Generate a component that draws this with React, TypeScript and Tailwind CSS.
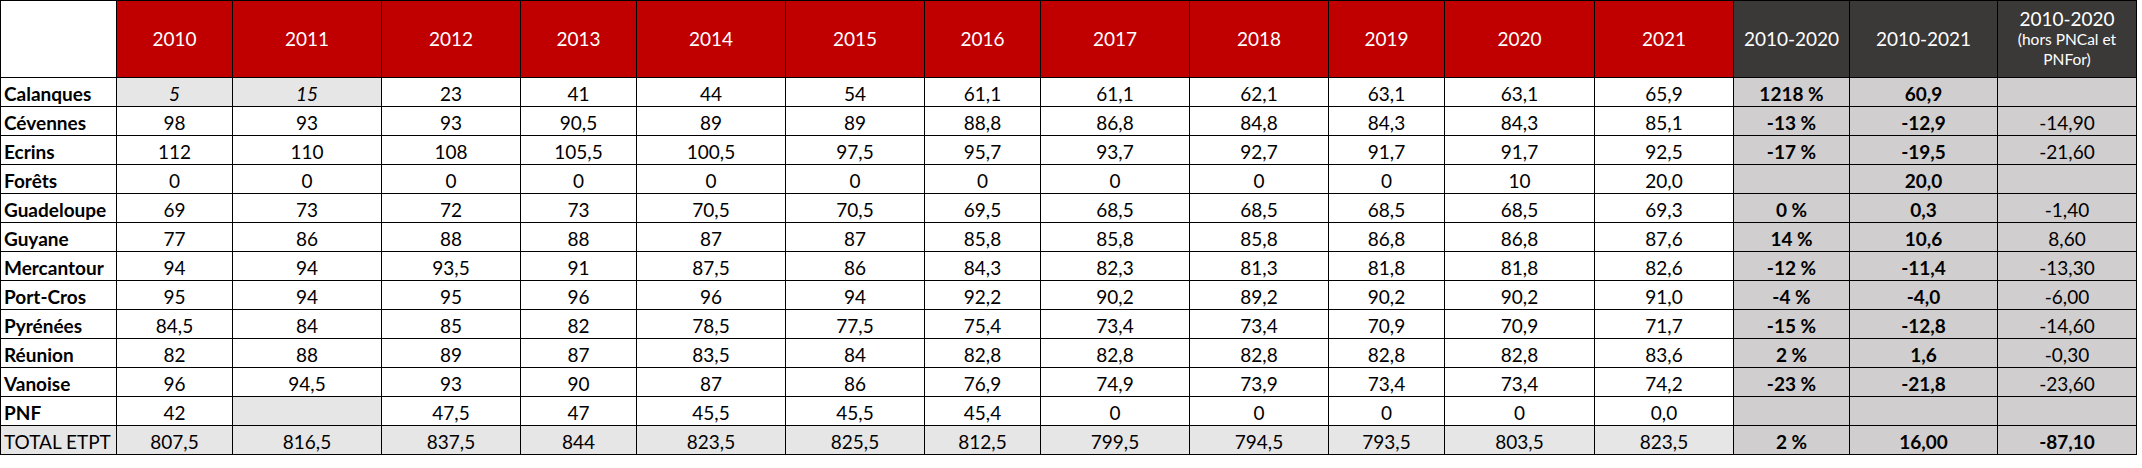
import React from "react";

type Row = {
  label: string;
  labelBold: boolean;
  years: string[];
  pct: string;
  diff: string;
  hors: string;
  total?: boolean;
};

const years = ["2010","2011","2012","2013","2014","2015","2016","2017","2018","2019","2020","2021"];

const rows: Row[] = [
  { label: "Calanques", labelBold: true, years: ["5","15","23","41","44","54","61,1","61,1","62,1","63,1","63,1","65,9"], pct: "1218 %", diff: "60,9", hors: "" },
  { label: "Cévennes", labelBold: true, years: ["98","93","93","90,5","89","89","88,8","86,8","84,8","84,3","84,3","85,1"], pct: "-13 %", diff: "-12,9", hors: "-14,90" },
  { label: "Ecrins", labelBold: true, years: ["112","110","108","105,5","100,5","97,5","95,7","93,7","92,7","91,7","91,7","92,5"], pct: "-17 %", diff: "-19,5", hors: "-21,60" },
  { label: "Forêts", labelBold: true, years: ["0","0","0","0","0","0","0","0","0","0","10","20,0"], pct: "", diff: "20,0", hors: "" },
  { label: "Guadeloupe", labelBold: true, years: ["69","73","72","73","70,5","70,5","69,5","68,5","68,5","68,5","68,5","69,3"], pct: "0 %", diff: "0,3", hors: "-1,40" },
  { label: "Guyane", labelBold: true, years: ["77","86","88","88","87","87","85,8","85,8","85,8","86,8","86,8","87,6"], pct: "14 %", diff: "10,6", hors: "8,60" },
  { label: "Mercantour", labelBold: true, years: ["94","94","93,5","91","87,5","86","84,3","82,3","81,3","81,8","81,8","82,6"], pct: "-12 %", diff: "-11,4", hors: "-13,30" },
  { label: "Port-Cros", labelBold: true, years: ["95","94","95","96","96","94","92,2","90,2","89,2","90,2","90,2","91,0"], pct: "-4 %", diff: "-4,0", hors: "-6,00" },
  { label: "Pyrénées", labelBold: true, years: ["84,5","84","85","82","78,5","77,5","75,4","73,4","73,4","70,9","70,9","71,7"], pct: "-15 %", diff: "-12,8", hors: "-14,60" },
  { label: "Réunion", labelBold: true, years: ["82","88","89","87","83,5","84","82,8","82,8","82,8","82,8","82,8","83,6"], pct: "2 %", diff: "1,6", hors: "-0,30" },
  { label: "Vanoise", labelBold: true, years: ["96","94,5","93","90","87","86","76,9","74,9","73,9","73,4","73,4","74,2"], pct: "-23 %", diff: "-21,8", hors: "-23,60" },
  { label: "PNF", labelBold: true, years: ["42","","47,5","47","45,5","45,5","45,4","0","0","0","0","0,0"], pct: "", diff: "", hors: "" },
  { label: "TOTAL ETPT", labelBold: false, years: ["807,5","816,5","837,5","844","823,5","825,5","812,5","799,5","794,5","793,5","803,5","823,5"], pct: "2 %", diff: "16,00", hors: "-87,10", total: true },
];

const cell = "border-r border-b border-black h-[29px] flex items-center justify-center pt-[2px] leading-none";

export default function App() {
  return (
    <div
      className="w-[2142px] h-[468px] bg-white text-black"
      style={{ fontFamily: "Lato, 'Open Sans', sans-serif" }}
    >
      <div className="grid grid-cols-[116px_116px_149px_139px_116px_149px_139px_116px_149px_139px_116px_150px_139px_116px_148px_139px] border-l border-t border-black w-max text-[19px]">
        {/* header */}
        <div className="border-r border-b border-black h-[77px] bg-white" />
        {years.map((y) => (
          <div key={y} className="border-r border-b border-black h-[77px] bg-[#c00000] text-white flex items-center justify-center">
            {y}
          </div>
        ))}
        <div className="border-r border-b border-black h-[77px] bg-[#3b3838] text-white flex items-center justify-center">
          2010-2020
        </div>
        <div className="border-r border-b border-black h-[77px] bg-[#3b3838] text-white flex items-center justify-center">
          2010-2021
        </div>
        <div className="border-r border-b border-black h-[77px] bg-[#3b3838] text-white flex flex-col items-center justify-start pt-[8px] text-center">
          <div className="leading-[20px]">2010-2020</div>
          <div className="text-[15.5px] leading-[20px]">(hors PNCal et</div>
          <div className="text-[15.5px] leading-[20px]">PNFor)</div>
        </div>

        {rows.map((r) => (
          <React.Fragment key={r.label}>
            <div
              className={`border-r border-b border-black h-[29px] flex items-center justify-start pl-[3px] pt-[2px] leading-none whitespace-nowrap overflow-hidden text-[19px] ${r.labelBold ? "font-bold" : "font-normal"} ${r.total ? "bg-[#e7e6e6]" : "bg-white"}`}
            >
              {r.label}
            </div>
            {r.years.map((v, i) => {
              const italic = r.label === "Calanques" && i < 2;
              const grey = r.total || italic || (r.label === "PNF" && i === 1);
              return (
                <div
                  key={i}
                  className={`${cell} ${grey ? "bg-[#e7e6e6]" : "bg-white"} ${italic ? "italic" : ""}`}
                >
                  {v}
                </div>
              );
            })}
            <div className={`${cell} bg-[#d0cece] font-bold`}>{r.pct}</div>
            <div className={`${cell} bg-[#d0cece] font-bold`}>{r.diff}</div>
            <div className={`${cell} bg-[#d0cece] ${r.total ? "font-bold" : "font-normal"}`}>{r.hors}</div>
          </React.Fragment>
        ))}
      </div>
    </div>
  );
}
